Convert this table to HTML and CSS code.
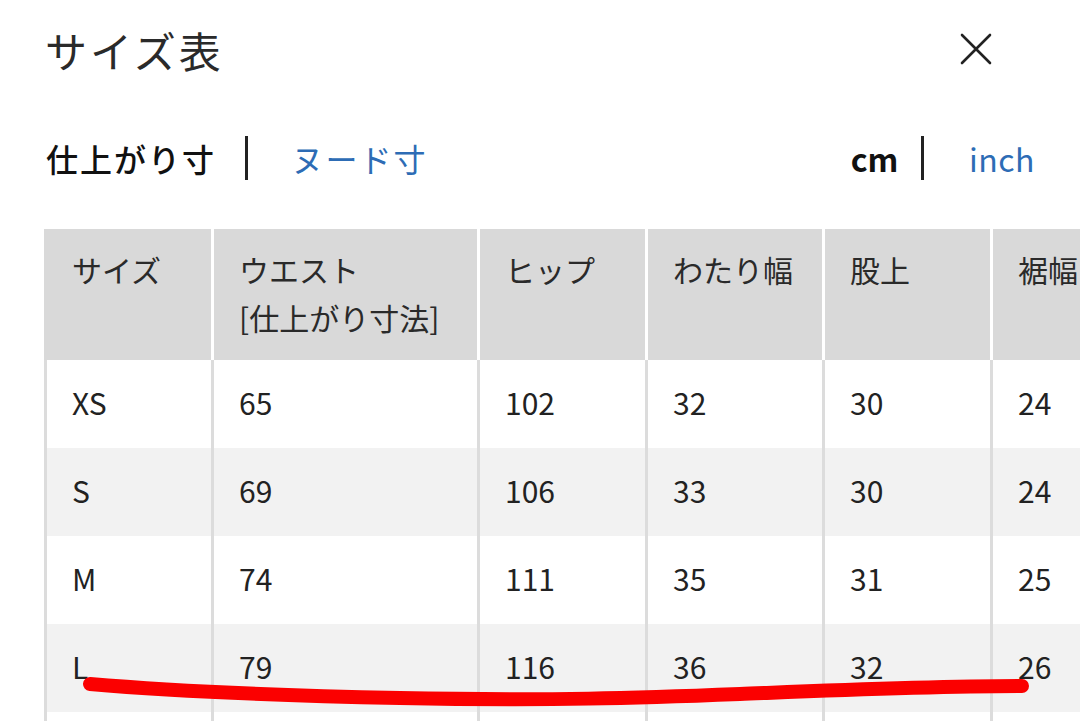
FILE: index.html
```html
<!DOCTYPE html>
<html lang="ja">
<head>
<meta charset="utf-8">
<title>サイズ表</title>
<link rel="stylesheet" href="styles.css">
</head>
<body>
<div class="modal">
  <header class="modal-head">
    <h1 class="title">サイズ表</h1>
    <button class="close" aria-label="閉じる">
      <svg width="32" height="32" viewBox="0 0 32 32"><path d="M2 2 L30 30 M30 2 L2 30" stroke="#222" stroke-width="2.6" stroke-linecap="round" fill="none"/></svg>
    </button>
  </header>
  <div class="toggles">
    <div class="toggle kind">
      <span class="opt active">仕上がり寸</span>
      <span class="sep"></span>
      <span class="opt link">ヌード寸</span>
    </div>
    <div class="toggle unit">
      <span class="opt active">cm</span>
      <span class="sep"></span>
      <span class="opt link">inch</span>
    </div>
  </div>
  <div class="table-wrap">
    <table class="size-table">
      <colgroup>
        <col class="c1"><col class="c2"><col class="c3"><col class="c4"><col class="c5"><col class="c6">
      </colgroup>
      <thead>
        <tr>
          <th>サイズ</th>
          <th>ウエスト<br>[仕上がり寸法]</th>
          <th>ヒップ</th>
          <th>わたり幅</th>
          <th>股上</th>
          <th>裾幅</th>
        </tr>
      </thead>
      <tbody>
        <tr><td>XS</td><td>65</td><td>102</td><td>32</td><td>30</td><td>24</td></tr>
        <tr><td>S</td><td>69</td><td>106</td><td>33</td><td>30</td><td>24</td></tr>
        <tr><td>M</td><td>74</td><td>111</td><td>35</td><td>31</td><td>25</td></tr>
        <tr><td>L</td><td>79</td><td>116</td><td>36</td><td>32</td><td>26</td></tr>
        <tr class="row-next"><td></td><td></td><td></td><td></td><td></td><td></td></tr>
      </tbody>
    </table>
  </div>
</div>
<svg class="marker" width="1080" height="721" viewBox="0 0 1080 721">
  <path d="M 90 684 C 160 690, 250 695, 400 698 S 640 698, 740 694 S 930 686, 1022 686" stroke="#fb0000" stroke-width="14" stroke-linecap="round" fill="none"/>
</svg>
</body>
</html>
```

FILE: styles.css
```css
html, body {
  margin: 0;
  padding: 0;
  background: #ffffff;
}
body {
  width: 1080px;
  height: 721px;
  overflow: hidden;
  position: relative;
  font-family: "Noto Sans CJK JP", "Noto Sans", sans-serif;
  color: #222222;
}
.modal {
  padding-left: 44px;
}
.modal-head {
  display: flex;
  align-items: center;
  justify-content: space-between;
  padding-top: 24px;
  padding-right: 88px;
  height: 52px;
}
.title {
  margin: 0 0 0 1px;
  font-size: 42px;
  font-weight: 400;
  letter-spacing: 3px;
  line-height: 52px;
  color: #2a2a2a;
}
.close {
  border: 0;
  background: none;
  padding: 0;
  width: 32px;
  height: 32px;
  display: flex;
  margin-top: -2px;
}
.toggles {
  display: flex;
  justify-content: space-between;
  align-items: center;
  margin-top: 58px;
  padding-right: 45px;
  height: 48px;
}
.toggle {
  display: flex;
  align-items: center;
}
.kind .opt {
  font-size: 32px;
  letter-spacing: 2px;
  line-height: 48px;
}
.kind .active {
  font-weight: 500;
  color: #111;
  margin-left: 2px;
}
.kind .sep {
  margin: 0 44px 0 29px;
}
.sep {
  width: 2.5px;
  height: 44px;
  background: #222;
}
.link {
  color: #2d6cb5;
}
.unit .opt {
  font-size: 32px;
  line-height: 48px;
}
.unit .active {
  font-weight: 700;
  color: #111;
}
.unit .link {
  letter-spacing: 0.5px;
}
.unit .sep {
  margin: 0 45px 0 23px;
}
.table-wrap {
  margin-top: 47px;
  overflow: hidden;
}
.size-table {
  border-collapse: collapse;
  table-layout: fixed;
  width: 1114px;
}
.c1 { width: 167px; }
.c2 { width: 266px; }
.c3 { width: 168px; }
.c4 { width: 177px; }
.c5 { width: 168px; }
.c6 { width: 168px; }
.size-table th,
.size-table td {
  text-align: left;
  font-size: 30px;
  line-height: 48px;
  padding: 18px 10px 22px 25px;
  border-left: 3px solid #dcdcdc;
  white-space: nowrap;
  overflow: hidden;
}
.size-table th {
  font-weight: 400;
  background: #d9d9d9;
  color: #2a2a2a;
  vertical-align: top;
  padding-top: 16px;
  padding-bottom: 19px;
  border-left-color: #ffffff;
}
.size-table th:first-child {
  border-left-color: #d9d9d9;
}
.size-table td {
  color: #222;
}
.size-table tbody tr:nth-child(even) td {
  background: #f2f2f2;
}
.size-table .row-next td {
  height: 48px;
}
.marker {
  position: absolute;
  left: 0;
  top: 0;
  pointer-events: none;
}
```
